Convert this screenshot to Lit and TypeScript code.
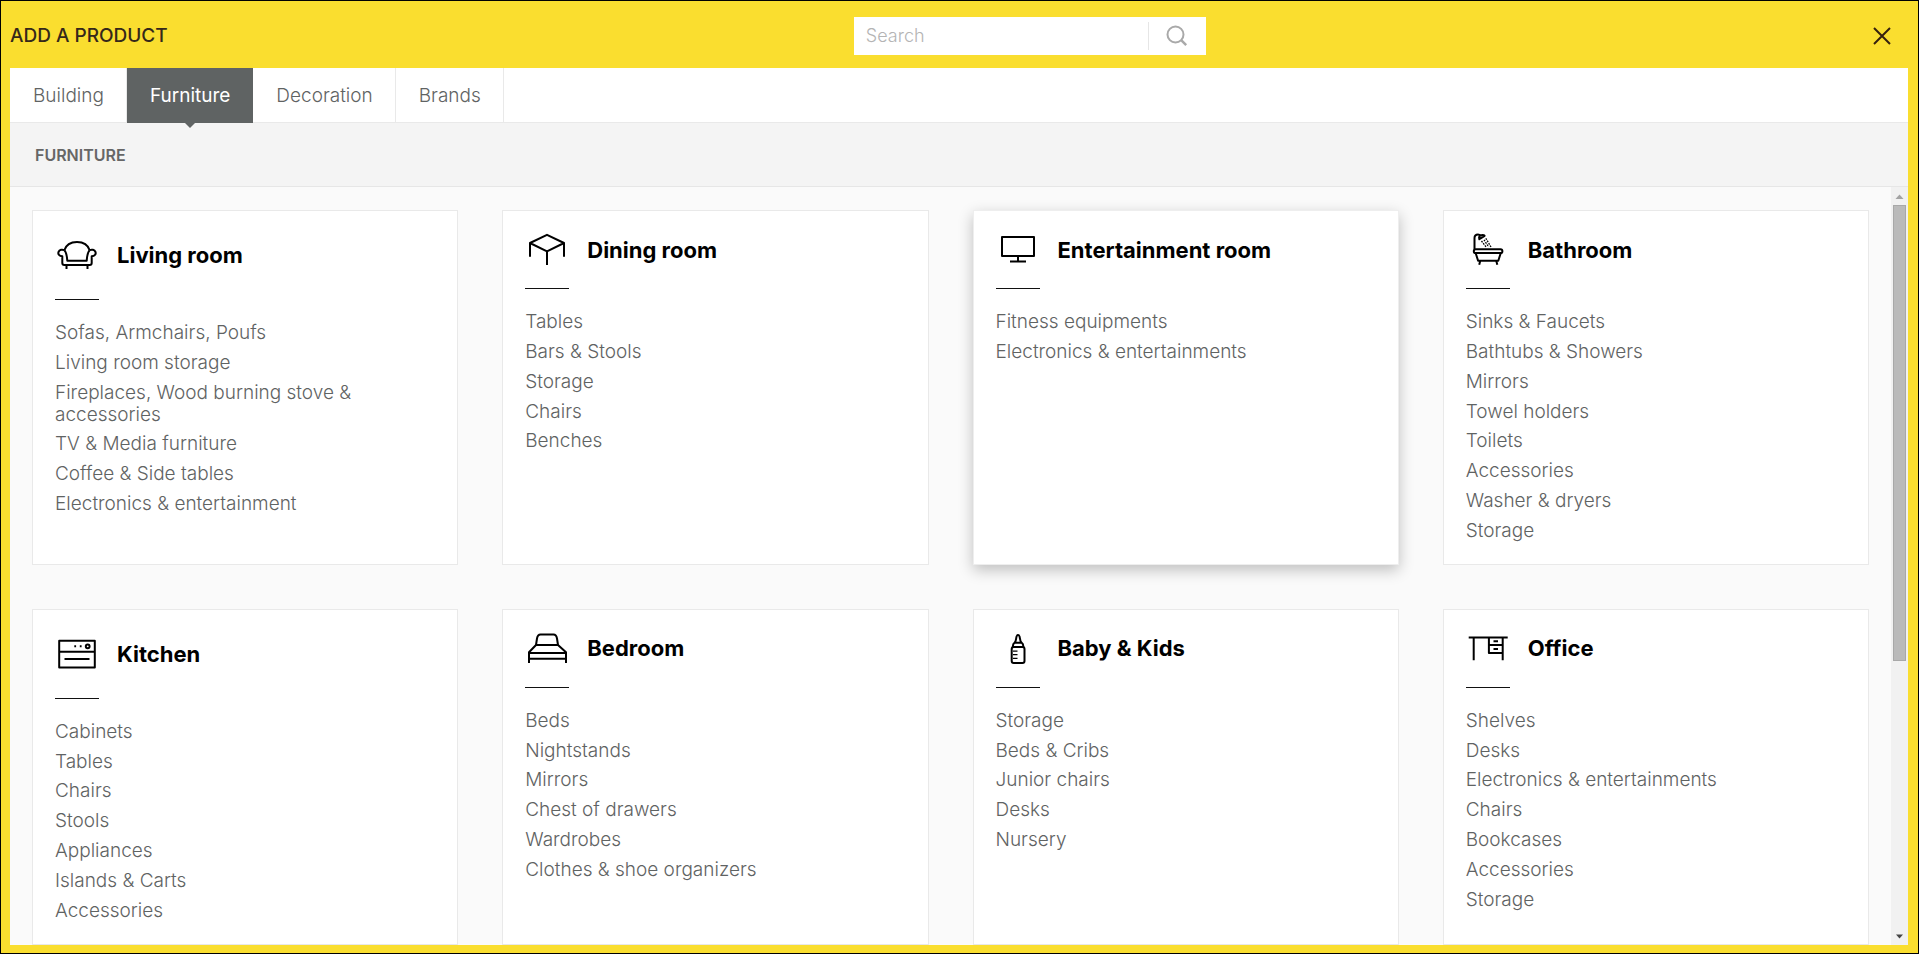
import { LitElement, html, svg, css, type SVGTemplateResult } from "lit";
import { customElement, property, state } from "lit/decorators.js";
import { classMap } from "lit/directives/class-map.js";

interface Category {
  title: string;
  icon: string;
  tall?: boolean;
  raised?: boolean;
  items: string[];
}

const TABS = ["Building", "Furniture", "Decoration", "Brands"];

const CATEGORIES: Category[] = [
  {
    title: "Living room",
    icon: "sofa",
    tall: true,
    items: [
      "Sofas, Armchairs, Poufs",
      "Living room storage",
      "Fireplaces, Wood burning stove & accessories",
      "TV & Media furniture",
      "Coffee & Side tables",
      "Electronics & entertainment",
    ],
  },
  { title: "Dining room", icon: "table", items: ["Tables", "Bars & Stools", "Storage", "Chairs", "Benches"] },
  {
    title: "Entertainment room",
    icon: "screen",
    raised: true,
    items: ["Fitness equipments", "Electronics & entertainments"],
  },
  {
    title: "Bathroom",
    icon: "bath",
    items: [
      "Sinks & Faucets",
      "Bathtubs & Showers",
      "Mirrors",
      "Towel holders",
      "Toilets",
      "Accessories",
      "Washer & dryers",
      "Storage",
    ],
  },
  {
    title: "Kitchen",
    icon: "oven",
    tall: true,
    items: ["Cabinets", "Tables", "Chairs", "Stools", "Appliances", "Islands & Carts", "Accessories"],
  },
  {
    title: "Bedroom",
    icon: "bed",
    items: ["Beds", "Nightstands", "Mirrors", "Chest of drawers", "Wardrobes", "Clothes & shoe organizers"],
  },
  {
    title: "Baby & Kids",
    icon: "bottle",
    items: ["Storage", "Beds & Cribs", "Junior chairs", "Desks", "Nursery"],
  },
  {
    title: "Office",
    icon: "desk",
    items: ["Shelves", "Desks", "Electronics & entertainments", "Chairs", "Bookcases", "Accessories", "Storage"],
  },
];

const ICONS: Record<string, SVGTemplateResult> = {
  sofa: svg`
    <path d="M9.3 17.2C11 12 15.500 8.900 22 8.900s11 3.100 12.700 8.300"/>
    <path d="M9.300 17.200C7.500 16.200 4.500 16.600 3.500 19c-.8 2.300.9 4 3.800 4.300V30c0 1.300.7 2 2 2h25.400c1.300 0 2-.7 2-2v-6.700c2.900-.3 4.600-2 3.800-4.300-1-2.400-4-2.800-5.800-1.800"/>
    <path d="M9.300 17.200c2 1.600 2.600 5.300 3 10.500h19.400c.4-5.200 1-8.900 3-10.500"/>
    <path d="M11.500 32v4M32.500 32v4"/>`,
  table: svg`<path d="M5 23.700V10l17-8.200L39 10v13.700M5 10l17 8.300L39 10M22 18.300V32"/>`,
  screen: svg`<path d="M6 4h32v19H6zM22 23v5.500M14 28.500h16"/>`,
  bath: svg`
    <rect x="7.800" y="16.300" width="28.600" height="3.800" rx="1.900"/>
    <path d="M9.800 20.500l2.300 7.300h20.200l2.300-7.300M14.200 28l-1 3.800M30.300 28l1 3.800"/>
    <path d="M8.500 16V5c0-2.500 1.500-3.500 3.500-3.500 1.200 0 2 .5 2.600 1.200"/>
    <path d="M13.300 6.200c-.8-2.400.5-4.300 3-4.300.8 0 2 .3 2.300.9z"/>
    <path d="M15.500 8l5 6.500M18 6.800l4.700 7.200M19.800 5.300l5.200 8.700" stroke-width="1.300" stroke-dasharray="1.700 1.100"/>`,
  oven: svg`
    <path d="M4.200 8.700h35.600v26.800H4.200zM4.200 19.700h35.600M9.500 27h25"/>
    <circle cx="32.700" cy="14.300" r="1.900"/>
    <path d="M19.300 14.300h1.800M24.800 14.300h1.800"/>`,
  bed: svg`
    <path d="M4 31V20.300l7-7.300h22l8 7.300V31M4 21h37M4 26.800h37"/>
    <path d="M11 13l1-6.500c.5-3 1.500-4 3.500-4h13c2 0 3 1 3.500 4l1 6.500"/>`,
  bottle: svg`
    <rect x="15.700" y="15" width="12.800" height="15.900" rx="2"/>
    <path d="M16.800 15c0-2.200.6-3.600 1.800-4.300h7c1.200.7 1.800 2.100 1.800 4.300"/>
    <path d="M18.700 10.700c1.600-1.900 1.200-4.700 2-6.700.5-1.400 2.200-1.400 2.700 0 .8 2 .4 4.800 2 6.700"/>
    <path d="M17 19.200h4.500M17 22.700h4.500M17 26.300h4.500" stroke-width="1.300"/>`,
  desk: svg`
    <path d="M2.700 5.400h39M7.700 5.400V28.300M36.700 5.400V28.300M22.900 5.400v15.500h13.800M22.900 13h13.800"/>
    <path d="M27.500 9.200h4.500M27.500 17h4.500"/>`,
};

@customElement("category-card")
export class CategoryCard extends LitElement {
  @property({ attribute: false }) category!: Category;

  static styles = css`
    :host {
      display: block;
    }
    .card {
      box-sizing: border-box;
      height: 100%;
      padding: 22px;
      background: #fff;
      border: 1px solid #e9e9e9;
    }
    .raised {
      border-color: #eee;
      box-shadow: 0 5px 14px rgba(0, 0, 0, 0.24);
    }
    .head {
      display: flex;
      align-items: center;
      gap: 18px;
    }
    .icon {
      flex: none;
      width: 44px;
      height: 33px;
      fill: none;
      stroke: #000;
      stroke-width: 2;
      stroke-linejoin: round;
    }
    .icon.tall {
      height: 44px;
    }
    .title {
      margin: 0;
      font-size: 22px;
      line-height: 24px;
      font-weight: 700;
      color: #000;
    }
    .rule {
      width: 44px;
      height: 1px;
      margin: 22px 0;
      border: 0;
      background: #111;
    }
    .list {
      display: flex;
      flex-direction: column;
      gap: 8px;
      margin: 0;
      padding: 0;
      list-style: none;
      font-size: 19px;
      font-weight: 300;
      line-height: 1.15;
    }
    .link {
      color: #5f6363;
      text-decoration: none;
    }
    .link:hover {
      color: #000;
    }
  `;

  render() {
    const c = this.category;
    return html`
      <section class=${classMap({ card: true, raised: !!c.raised })}>
        <div class="head">
          <svg
            class=${classMap({ icon: true, tall: !!c.tall })}
            viewBox=${c.tall ? "0 0 44 44" : "0 0 44 33"}
            aria-hidden="true"
          >
            ${ICONS[c.icon]}
          </svg>
          <h3 class="title">${c.title}</h3>
        </div>
        <hr class="rule" />
        <ul class="list">
          ${c.items.map((item) => html`<li><a class="link" href="#">${item}</a></li>`)}
        </ul>
      </section>
    `;
  }
}

@customElement("app-root")
export class AppRoot extends LitElement {
  @state() private active = "Furniture";

  static styles = css`
    :host {
      display: block;
      font-family: Inter, "Open Sans", sans-serif;
      font-size: 19px;
    }
    .dialog {
      box-sizing: border-box;
      display: flex;
      flex-direction: column;
      height: 100vh;
      padding: 0 10px 8px 9px;
      background: #fade2f;
      border: 1px solid #000;
    }
    .header {
      box-sizing: border-box;
      display: flex;
      align-items: center;
      justify-content: space-between;
      height: 67px;
      padding: 2px 16px 0 0;
    }
    .heading {
      margin: 0;
      font-size: 19px;
      font-weight: 500;
      color: #35281a;
    }
    .search {
      display: flex;
      align-items: center;
      width: 352px;
      height: 38px;
      margin-left: 20px;
      background: #fff;
    }
    .field {
      flex: 1;
      min-width: 0;
      height: 28px;
      padding: 0 12px;
      border: 0;
      border-right: 1px solid #e6e6e6;
      outline: 0;
      background: none;
      font: inherit;
      font-size: 18px;
      font-weight: 300;
      color: #5f6363;
    }
    .field::placeholder {
      color: #b4b4b4;
      opacity: 1;
    }
    .go,
    .close {
      display: flex;
      align-items: center;
      justify-content: center;
      padding: 0;
      border: 0;
      background: none;
      cursor: pointer;
    }
    .go {
      width: 57px;
      height: 38px;
    }
    .panel {
      flex: 1;
      min-height: 0;
      display: flex;
      flex-direction: column;
      background: #fafafa;
    }
    .tabs {
      display: flex;
      height: 54px;
      background: #fff;
      border-bottom: 1px solid #e9e9e9;
    }
    .tab {
      padding: 0 22px 0 23px;
      border: 0;
      border-right: 1px solid #e9e9e9;
      background: none;
      font: inherit;
      font-weight: 300;
      color: #5f6363;
      cursor: pointer;
    }
    .tab.active {
      position: relative;
      height: 55px;
      border-color: #5f6363;
      background: #5f6363;
      color: #fff;
      font-weight: 400;
    }
    .tab.active::after {
      content: "";
      position: absolute;
      top: 100%;
      left: 50%;
      margin-left: -5px;
      border: 5px solid transparent;
      border-top-color: #5f6363;
      border-bottom: 0;
    }
    .band {
      display: flex;
      align-items: center;
      height: 63px;
      padding: 0 25px;
      background: #f4f4f4;
      border-bottom: 1px solid #e6e6e6;
    }
    .subheading {
      margin: 0;
      font-size: 16px;
      font-weight: 600;
      color: #666;
    }
    .body {
      flex: 1;
      min-height: 0;
      display: flex;
    }
    .cards {
      flex: 1;
      min-width: 0;
      display: grid;
      grid-template-columns: repeat(4, minmax(0, 1fr));
      align-content: start;
      gap: 44px;
      padding: 23px 22px;
      overflow-y: auto;
      scrollbar-width: none;
    }
    .scrollbar {
      display: flex;
      flex-direction: column;
      align-items: center;
      width: 17px;
      background: #f1f1f1;
    }
    .arrow {
      flex: none;
      width: 17px;
      height: 18px;
    }
    .track {
      flex: 1;
      width: 13px;
    }
    .thumb {
      box-sizing: border-box;
      background: #bababa;
      border: 1px solid #a8a8a8;
    }
  `;

  private visibleShare = 63.2;

  render() {
    return html`
      <main class="dialog">
        <header class="header">
          <h1 class="heading">ADD A PRODUCT</h1>
          <form class="search" role="search" @submit=${(e: Event) => e.preventDefault()}>
            <input class="field" type="text" placeholder="Search" aria-label="Search" />
            <button class="go" type="submit" aria-label="Search products">
              <svg width="22" height="22" viewBox="0 0 22 22" fill="none" stroke="#a9a9a9" stroke-width="2">
                <circle cx="9.500" cy="9.500" r="8" />
                <path d="M15.200 15.200l5 5" stroke-width="2.500" />
              </svg>
            </button>
          </form>
          <button class="close" type="button" aria-label="Close">
            <svg width="20" height="20" viewBox="0 0 20 20" fill="none" stroke="#35200f" stroke-width="2">
              <path d="M2 2l16 16M18 2L2 18" />
            </svg>
          </button>
        </header>
        <div class="panel">
          <nav class="tabs" role="tablist">
            ${TABS.map(
              (tab) => html`<button
                class=${classMap({ tab: true, active: tab === this.active })}
                type="button"
                role="tab"
                aria-selected=${tab === this.active}
                @click=${() => (this.active = tab)}
              >${tab}</button>`,
            )}
          </nav>
          <div class="band"><h2 class="subheading">${this.active.toUpperCase()}</h2></div>
          <div class="body">
            <div class="cards">
              ${CATEGORIES.map((c) => html`<category-card .category=${c}></category-card>`)}
            </div>
            <div class="scrollbar" aria-hidden="true">
              <svg class="arrow" viewBox="0 0 17 18"><path d="M4.500 12l4-4.500 4 4.500z" fill="#a3a3a3" /></svg>
              <div class="track"><div class="thumb" style="height:${this.visibleShare}%"></div></div>
              <svg class="arrow" viewBox="0 0 17 18"><path d="M5 7.500l3.500 4 3.500-4z" fill="#444" /></svg>
            </div>
          </div>
        </div>
      </main>
    `;
  }
}
